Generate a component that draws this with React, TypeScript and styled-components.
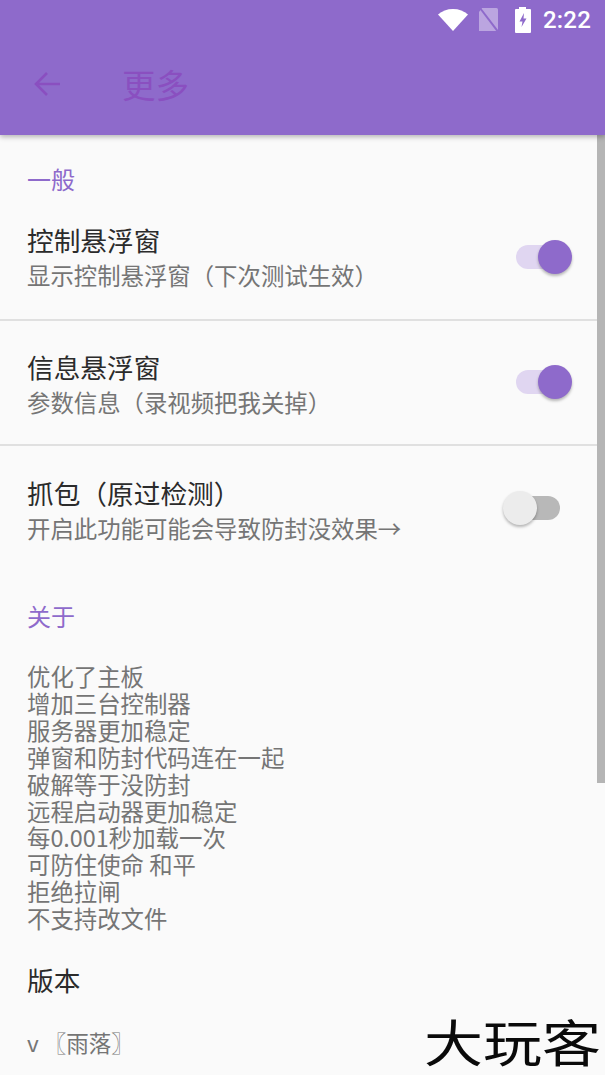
import React from 'react';
import styled, { createGlobalStyle } from 'styled-components';

const GlobalStyle = createGlobalStyle`
  html, body {
    margin: 0;
    padding: 0;
    background: #fafafa;
  }
  * {
    box-sizing: border-box;
  }
`;

const Screen = styled.div`
  position: relative;
  width: 605px;
  height: 1075px;
  overflow: hidden;
  background: #fafafa;
  font-family: 'Noto Sans CJK SC', 'Roboto', sans-serif;
`;

const Header = styled.header`
  position: relative;
  z-index: 2;
  height: 135px;
  background: #8e6acb;
  box-shadow: 0 2px 5px rgba(0, 0, 0, 0.28);
`;

const StatusBar = styled.div`
  height: 40px;
  padding-right: 14px;
  display: flex;
  align-items: center;
  justify-content: flex-end;
  color: #fff;
`;

const Clock = styled.span`
  margin-left: 11px;
  font-family: 'Roboto', sans-serif;
  font-size: 24px;
  font-weight: 500;
  letter-spacing: 0.2px;
`;

const Toolbar = styled.div`
  height: 95px;
  padding: 0 0 8px 33px;
  display: flex;
  align-items: center;
  color: #8a4fc0;
`;

const PageTitle = styled.h1`
  margin: 0 0 0 61px;
  font-size: 33.5px;
  font-weight: 400;
  line-height: 1;
`;

const Content = styled.main`
  padding: 28px 0 0;
`;

const SectionLabel = styled.div`
  padding-left: 27px;
  color: #8e6acb;
  font-size: 24px;
  line-height: 32px;
`;

const Row = styled.div<{ $top: number; $height?: number; $divided?: boolean }>`
  height: ${(p) => p.$height ?? 125}px;
  padding: ${(p) => p.$top}px 45px 0 27px;
  display: flex;
  align-items: flex-start;
  justify-content: space-between;
  border-bottom: ${(p) => (p.$divided ? '2px solid #e0e0e0' : 'none')};
`;

const RowText = styled.div`
  display: flex;
  flex-direction: column;
`;

const RowTitle = styled.div`
  color: #2b2b2b;
  font-size: 26.7px;
  line-height: 36px;
`;

const RowSub = styled.div`
  color: #757575;
  font-size: 23.4px;
  line-height: 34px;
`;

const Switch = styled.div<{ $on?: boolean; $offset?: number }>`
  position: relative;
  flex: none;
  width: 44px;
  height: 24px;
  margin-top: ${(p) => p.$offset ?? 21}px;
  border-radius: 12px;
  background: ${(p) => (p.$on ? '#e0d6f1' : '#b8b8b8')};
`;

const Thumb = styled.span<{ $on?: boolean }>`
  position: absolute;
  top: -5px;
  left: ${(p) => (p.$on ? '22px' : '-13px')};
  width: 34px;
  height: 34px;
  border-radius: 50%;
  background: ${(p) => (p.$on ? '#8e6acb' : '#ececec')};
  box-shadow: 0 2px 3px rgba(0, 0, 0, 0.28);
`;

const AboutBlock = styled.div`
  margin-top: 29px;
`;

const NotesList = styled.div`
  margin-top: 31px;
  padding-left: 27px;
  color: #757575;
  font-size: 23.4px;
  line-height: 26.9px;
`;

const VersionBlock = styled.div`
  margin-top: 30px;
  padding-left: 27px;
`;

const VersionValue = styled.div`
  color: #757575;
  font-size: 22.5px;
  line-height: 34px;
  margin-top: 27px;
`;

const ScrollThumb = styled.div`
  position: absolute;
  top: 135px;
  right: 0;
  width: 8px;
  height: 648px;
  background: #b5b5b5;
`;

const Watermark = styled.div`
  position: absolute;
  right: 4px;
  bottom: 4px;
  color: #0a0a0a;
  font-size: 59px;
  line-height: 60px;
  font-weight: 400;
  white-space: nowrap;
  transform: scaleY(0.85);
`;

const notes = [
  '优化了主板',
  '增加三台控制器',
  '服务器更加稳定',
  '弹窗和防封代码连在一起',
  '破解等于没防封',
  '远程启动器更加稳定',
  '每0.001秒加载一次',
  '可防住使命 和平',
  '拒绝拉闸',
  '不支持改文件',
];

const WifiIcon = () => (
  <svg width="30" height="22" viewBox="0 0 30 22">
    <path d="M15 22 0 5.5C4 2 9 0 15 0s11 2 15 5.5z" fill="#fff" />
  </svg>
);

const NoSimIcon = () => (
  <svg width="22" height="26" viewBox="0 0 22 26" style={{ marginLeft: 9 }}>
    <path d="M5 1h14.5a1.5 1.5 0 0 1 1.5 1.5V24H2V5z" fill="#fff" opacity="0.4" />
    <path d="M3 1 22 26" stroke="#8e6acb" strokeWidth="2" />
  </svg>
);

const BatteryIcon = () => (
  <svg width="18" height="26" viewBox="0 0 18 26" style={{ marginLeft: 15 }}>
    <path
      d="M5 2V0h7v2h4a1 1 0 0 1 1 1v22a1 1 0 0 1-1 1H2a1 1 0 0 1-1-1V3a1 1 0 0 1 1-1z"
      fill="#fff"
    />
    <path d="M10 6 5.5 14.5H8.5L7.5 20 12.5 11.5H9.5z" fill="#8e6acb" />
  </svg>
);

const BackIcon = () => (
  <svg width="28" height="26" viewBox="0 0 28 26" fill="none" stroke="#8a4fc0" strokeWidth="2.6">
    <path d="M27 13H3M14 2 3 13l11 11" />
  </svg>
);

export default function App() {
  return (
    <Screen>
      <GlobalStyle />
      <Header>
        <StatusBar>
          <WifiIcon />
          <NoSimIcon />
          <BatteryIcon />
          <Clock>2:22</Clock>
        </StatusBar>
        <Toolbar>
          <BackIcon />
          <PageTitle>更多</PageTitle>
        </Toolbar>
      </Header>
      <Content>
        <SectionLabel>一般</SectionLabel>
        <Row $top={27} $height={126} $divided>
          <RowText>
            <RowTitle>控制悬浮窗</RowTitle>
            <RowSub>显示控制悬浮窗（下次测试生效）</RowSub>
          </RowText>
          <Switch $on $offset={23}>
            <Thumb $on />
          </Switch>
        </Row>
        <Row $top={28} $divided>
          <RowText>
            <RowTitle>信息悬浮窗</RowTitle>
            <RowSub>参数信息（录视频把我关掉）</RowSub>
          </RowText>
          <Switch $on>
            <Thumb $on />
          </Switch>
        </Row>
        <Row $top={29}>
          <RowText>
            <RowTitle>抓包（原过检测）</RowTitle>
            <RowSub>开启此功能可能会导致防封没效果→</RowSub>
          </RowText>
          <Switch>
            <Thumb />
          </Switch>
        </Row>
        <AboutBlock>
          <SectionLabel>关于</SectionLabel>
          <NotesList>
            {notes.map((line) => (
              <div key={line}>{line}</div>
            ))}
          </NotesList>
        </AboutBlock>
        <VersionBlock>
          <RowTitle>版本</RowTitle>
          <VersionValue>v 〖雨落〗</VersionValue>
        </VersionBlock>
      </Content>
      <ScrollThumb />
      <Watermark>大玩客</Watermark>
    </Screen>
  );
}
